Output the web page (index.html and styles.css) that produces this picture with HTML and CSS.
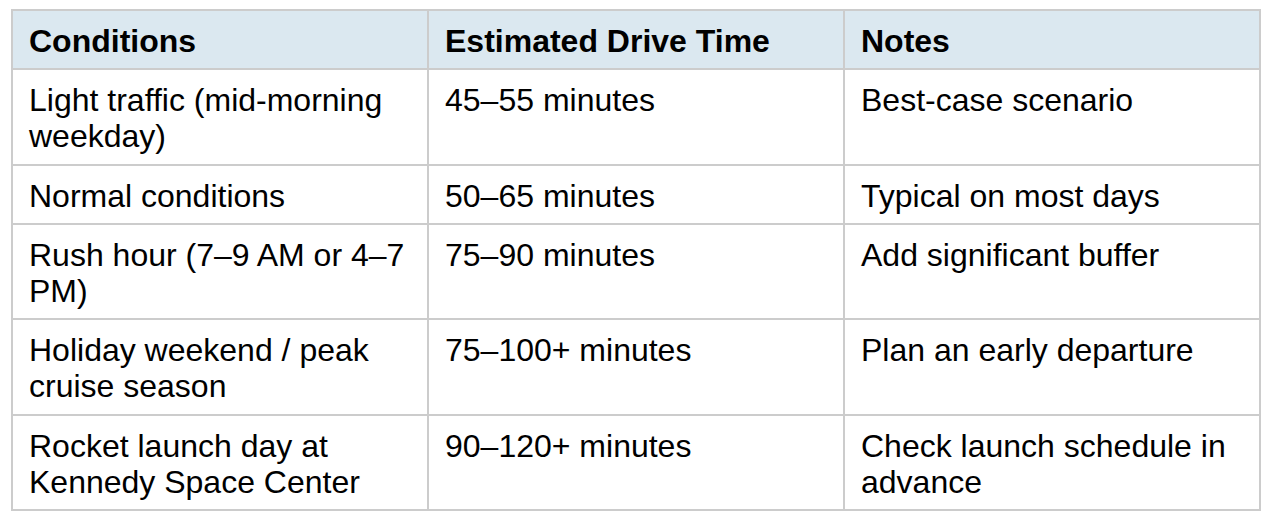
FILE: index.html
```html
<!DOCTYPE html>
<html>
<head>
<meta charset="utf-8">
<link rel="stylesheet" href="styles.css">
</head>
<body>
<div class="wrap">
<table class="drive">
<thead>
<tr><th>Conditions</th><th>Estimated Drive Time</th><th>Notes</th></tr>
</thead>
<tbody>
<tr><td>Light traffic (mid-morning weekday)</td><td>45–55 minutes</td><td>Best-case scenario</td></tr>
<tr><td>Normal conditions</td><td>50–65 minutes</td><td>Typical on most days</td></tr>
<tr><td>Rush hour (7–9 AM or 4–7 PM)</td><td>75–90 minutes</td><td>Add significant buffer</td></tr>
<tr><td>Holiday weekend / peak cruise season</td><td>75–100+ minutes</td><td>Plan an early departure</td></tr>
<tr><td>Rocket launch day at Kennedy Space Center</td><td>90–120+ minutes</td><td>Check launch schedule in advance</td></tr>
</tbody>
</table>
</div>
</body>
</html>
```
FILE: styles.css
```css
html, body {
  margin: 0;
  padding: 0;
  background: #fff;
}
.wrap {
  padding: 9px 11px;
}
.drive {
  width: 1250px;
  border-collapse: collapse;
  table-layout: fixed;
  font-family: "Liberation Sans", Arial, sans-serif;
  font-size: 32px;
  line-height: 36.2px;
  color: #000;
}
.drive th,
.drive td {
  border: 2px solid #cccccc;
  padding: 12px 16px 9px;
  text-align: left;
  vertical-align: top;
}
.drive th {
  background: #dbe8f0;
  font-weight: bold;
}
```
